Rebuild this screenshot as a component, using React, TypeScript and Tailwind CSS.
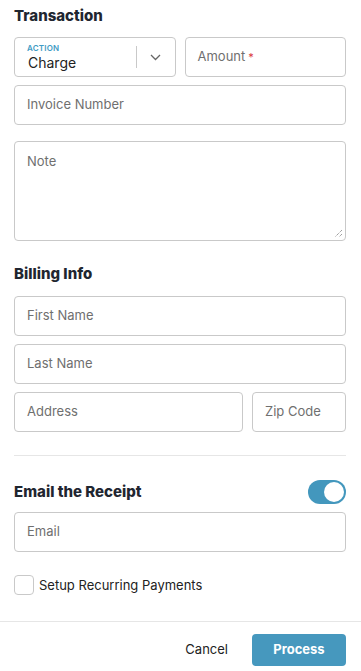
const font = { fontFamily: 'Inter, "Liberation Sans", sans-serif' };

function Field({ placeholder, className = '' }: { placeholder: string; className?: string }) {
  return (
    <div className={`h-10 border border-[#c9c9c9] rounded-[4px] flex items-center px-[12px] text-[13px] text-[#6f6f6f] ${className}`}>
      {placeholder}
    </div>
  );
}

export default function App() {
  return (
    <div className="w-[361px] h-[671px] bg-white overflow-hidden flex flex-col text-[#24292e]" style={font}>
      <div className="pl-[14px] pr-[15px] pt-[6px]">
        {/* Transaction */}
        <h2 className="text-[15px] font-extrabold leading-5 text-[#1f2630]">Transaction</h2>
        <div className="mt-[11px] grid grid-cols-2 gap-[9px]">
          <div className="h-10 border border-[#c9c9c9] rounded-[4px] flex items-center">
            <div className="flex-1 pl-[12px] pt-[2px] flex flex-col justify-center">
              <span className="text-[8px] font-semibold tracking-wide text-[#3f9bc4] leading-[10px]">ACTION</span>
              <span className="text-[14px] text-[#222] leading-[20px] pl-[1px]">Charge</span>
            </div>
            <div className="w-px h-[22px] bg-[#c9c9c9]" />
            <div className="w-[38px] flex justify-center">
              <svg width="11" height="7" viewBox="0 0 11 7" fill="none">
                <path d="M1 1L5.5 5.5L10 1" stroke="#666" strokeWidth="1.3" />
              </svg>
            </div>
          </div>
          <div className="h-10 border border-[#c9c9c9] rounded-[4px] flex items-center px-[12px] text-[13px] text-[#6f6f6f]">
            Amount<span className="text-[#d9363e] ml-[3px] text-[11px]">*</span>
          </div>
        </div>
        <Field placeholder="Invoice Number" className="mt-2" />
        <div className="mt-4 h-[100px] border border-[#c9c9c9] rounded-[4px] px-[12px] pt-[10px] relative text-[13px] text-[#6f6f6f]">
          Note
          <svg className="absolute right-[2px] bottom-[2px]" width="9" height="9" viewBox="0 0 9 9">
            <path d="M8 1L1 8M8 5L5 8" stroke="#777" strokeWidth="1" strokeDasharray="1 1" />
          </svg>
        </div>

        {/* Billing */}
        <h2 className="mt-[23px] text-[15px] font-extrabold leading-5 text-[#1f2630]">Billing Info</h2>
        <Field placeholder="First Name" className="mt-[12px]" />
        <Field placeholder="Last Name" className="mt-2" />
        <div className="mt-2 flex gap-[9px]">
          <Field placeholder="Address" className="flex-1" />
          <Field placeholder="Zip Code" className="w-[94px]" />
        </div>

        <div className="mt-[23px] h-px bg-[#e6e6e6]" />

        {/* Email */}
        <div className="mt-[24px] flex items-center justify-between">
          <h2 className="text-[15px] font-extrabold leading-5 text-[#1f2630]">Email the Receipt</h2>
          <div className="w-[38px] h-[24px] rounded-full bg-[#4397bd] flex items-center justify-end pr-[2px]">
            <div className="w-[20px] h-[20px] rounded-full bg-white" />
          </div>
        </div>
        <Field placeholder="Email" className="mt-[8px]" />

        <label className="mt-[23px] flex items-center gap-[5px] text-[13px] leading-5 text-[#222]">
          <span className="w-[20px] h-[20px] border border-[#c9c9c9] rounded-[4px]" />
          Setup Recurring Payments
        </label>
      </div>

      <div className="mt-[26px] h-px bg-[#e6e6e6]" />
      <div className="pl-[14px] pr-[15px] pt-[12px] flex justify-end items-center gap-[24px]">
        <span className="text-[13px] text-[#222]">Cancel</span>
        <button className="w-[94px] h-[32px] rounded-[4px] bg-[#4698be] text-white text-[13px] font-bold">Process</button>
      </div>
    </div>
  );
}
